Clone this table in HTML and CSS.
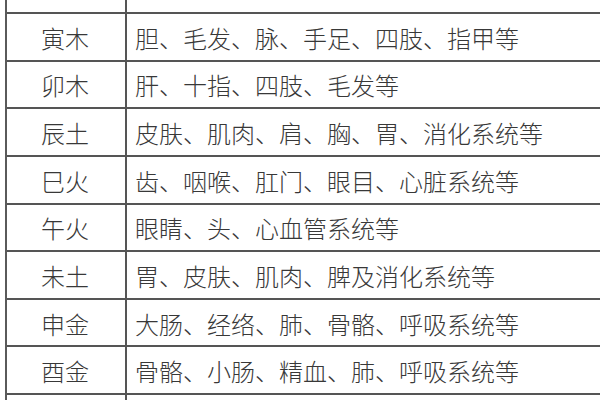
FILE: index.html
```html
<!DOCTYPE html>
<html lang="zh">
<head>
<meta charset="utf-8">
<link rel="stylesheet" href="styles.css">
</head>
<body>
<div class="table">
  <div class="row row-top"><div class="branch"></div><div class="organs"></div></div>
  <div class="row"><div class="branch">寅木</div><div class="organs">胆、毛发、脉、手足、四肢、指甲等</div></div>
  <div class="row"><div class="branch">卯木</div><div class="organs">肝、十指、四肢、毛发等</div></div>
  <div class="row"><div class="branch">辰土</div><div class="organs">皮肤、肌肉、肩、胸、胃、消化系统等</div></div>
  <div class="row"><div class="branch">巳火</div><div class="organs">齿、咽喉、肛门、眼目、心脏系统等</div></div>
  <div class="row"><div class="branch">午火</div><div class="organs">眼睛、头、心血管系统等</div></div>
  <div class="row"><div class="branch">未土</div><div class="organs">胃、皮肤、肌肉、脾及消化系统等</div></div>
  <div class="row"><div class="branch">申金</div><div class="organs">大肠、经络、肺、骨骼、呼吸系统等</div></div>
  <div class="row"><div class="branch">酉金</div><div class="organs">骨骼、小肠、精血、肺、呼吸系统等</div></div>
  <div class="row row-bottom"><div class="branch"></div><div class="organs"></div></div>
</div>
</body>
</html>
```
FILE: styles.css
```css
html, body {
  margin: 0;
  padding: 0;
  background: #ffffff;
  overflow: hidden;
  width: 600px;
  height: 400px;
}
.table {
  box-sizing: border-box;
  margin-left: 5px;
  width: 595px;
  border-left: 2px solid #5a5a5a;
  font-family: "Noto Sans CJK SC", sans-serif;
  font-size: 24px;
  font-weight: 300;
  color: #383838;
}
.row {
  box-sizing: border-box;
  height: 47.625px;
  border-top: 2px solid #555555;
  display: grid;
  grid-template-columns: 120px 1fr;
  align-items: center;
}
.row-top {
  height: 12px;
  border-top: none;
}
.row-bottom {
  height: 7px;
}
.branch {
  height: 100%;
  border-right: 2px solid #555555;
  box-sizing: border-box;
  display: flex;
  align-items: center;
  justify-content: center;
  padding-right: 2px;
  padding-top: 1px;
}
.organs {
  padding-left: 8px;
  padding-top: 1px;
  white-space: nowrap;
  overflow: hidden;
}
```
